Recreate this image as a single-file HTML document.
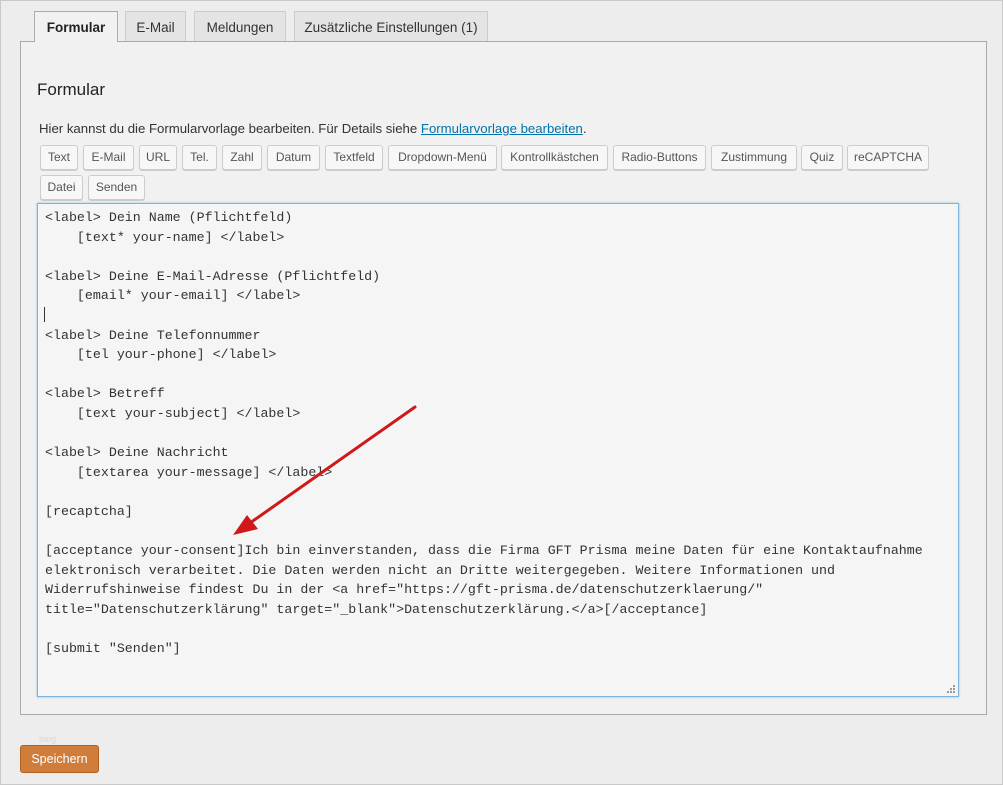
<!DOCTYPE html>
<html><head><meta charset="utf-8"><style>
body{margin:0;width:1003px;height:785px;background:#ededed;font-family:"Liberation Sans",sans-serif;position:relative;overflow:hidden}
.frame{position:absolute;left:0;top:0;width:1001px;height:783px;border:1px solid #c8c8c8}
.tab{position:absolute;top:11px;height:30px;border:1px solid #ccc;border-bottom:none;background:#e4e4e4;font-size:13.5px;color:#333;line-height:31px;text-align:center;box-sizing:border-box}
.panel{position:absolute;left:20px;top:41px;width:967px;height:674px;border:1px solid #aaa;box-sizing:border-box;background:#f1f1f1}
.b{position:absolute;height:25px;border:1px solid #ccc;border-radius:3px;background:#f7f7f7;box-shadow:0 1px 0 #ccc;box-sizing:border-box;font-size:12px;color:#555;text-align:center;line-height:23px}
.ta{position:absolute;left:37px;top:203px;width:922px;height:494px;border:1px solid #7fb3de;box-sizing:border-box;background:#f5f5f5;box-shadow:0 0 2px rgba(30,140,190,.5)}
pre{margin:0;position:absolute;left:45px;top:208px;font-family:"Liberation Mono",monospace;font-size:13.3px;line-height:19.6px;color:#333}
</style></head><body>
<div class="frame"></div>
<div class="panel"></div>
<div class="tab" style="left:34px;width:84px;height:31px;background:#f1f1f1;font-weight:bold;color:#222;border-color:#aaa">Formular</div>
<div class="tab" style="left:125px;width:61px">E-Mail</div>
<div class="tab" style="left:194px;width:92px">Meldungen</div>
<div class="tab" style="left:294px;width:194px">Zusätzliche Einstellungen (1)</div>
<div style="position:absolute;left:37px;top:80px;font-size:17px;color:#222">Formular</div>
<div style="position:absolute;left:39px;top:121px;font-size:13.2px;color:#333">Hier kannst du die Formularvorlage bearbeiten. Für Details siehe <span style="color:#0073aa;text-decoration:underline">Formularvorlage bearbeiten</span>.</div>
<div class="b" style="left:40px;top:145px;width:38px">Text</div>
<div class="b" style="left:83px;top:145px;width:51px">E-Mail</div>
<div class="b" style="left:139px;top:145px;width:38px">URL</div>
<div class="b" style="left:182px;top:145px;width:35px">Tel.</div>
<div class="b" style="left:222px;top:145px;width:40px">Zahl</div>
<div class="b" style="left:267px;top:145px;width:53px">Datum</div>
<div class="b" style="left:325px;top:145px;width:58px">Textfeld</div>
<div class="b" style="left:388px;top:145px;width:109px">Dropdown-Menü</div>
<div class="b" style="left:501px;top:145px;width:107px">Kontrollkästchen</div>
<div class="b" style="left:613px;top:145px;width:93px">Radio-Buttons</div>
<div class="b" style="left:711px;top:145px;width:86px">Zustimmung</div>
<div class="b" style="left:801px;top:145px;width:42px">Quiz</div>
<div class="b" style="left:847px;top:145px;width:82px">reCAPTCHA</div>
<div class="b" style="left:40px;top:175px;width:43px">Datei</div>
<div class="b" style="left:88px;top:175px;width:57px">Senden</div>
<div class="ta"></div>
<pre>&lt;label&gt; Dein Name (Pflichtfeld)
    [text* your-name] &lt;/label&gt;

&lt;label&gt; Deine E-Mail-Adresse (Pflichtfeld)
    [email* your-email] &lt;/label&gt;

&lt;label&gt; Deine Telefonnummer
    [tel your-phone] &lt;/label&gt;

&lt;label&gt; Betreff
    [text your-subject] &lt;/label&gt;

&lt;label&gt; Deine Nachricht
    [textarea your-message] &lt;/label&gt;

[recaptcha]

[acceptance your-consent]Ich bin einverstanden, dass die Firma GFT Prisma meine Daten für eine Kontaktaufnahme
elektronisch verarbeitet. Die Daten werden nicht an Dritte weitergegeben. Weitere Informationen und
Widerrufshinweise findest Du in der &lt;a href="https://gft-prisma.de/datenschutzerklaerung/"
title="Datenschutzerklärung" target="_blank"&gt;Datenschutzerklärung.&lt;/a&gt;[/acceptance]

[submit "Senden"]</pre>
<div style="position:absolute;left:44px;top:307px;width:1px;height:15px;background:#333"></div>
<svg style="position:absolute;left:0;top:0" width="1003" height="785">
<line x1="415" y1="407" x2="250" y2="523" stroke="#d01818" stroke-width="3" stroke-linecap="round"/>
<polygon points="233,535 247,515 258,529" fill="#d01818"/>
<g fill="#999"><rect x="953" y="685" width="2" height="2"/><rect x="950" y="688" width="2" height="2"/><rect x="953" y="688" width="2" height="2"/><rect x="947" y="691" width="2" height="2"/><rect x="950" y="691" width="2" height="2"/><rect x="953" y="691" width="2" height="2"/></g>
</svg>
<div style="position:absolute;left:39px;top:734px;font-size:9px;color:#d6d6d6">blog</div>
<div style="position:absolute;left:20px;top:745px;width:79px;height:28px;background:#d07c3a;border:1px solid #b0601f;border-radius:3px;box-sizing:border-box;color:#fff;font-size:12.5px;text-align:center;line-height:27px">Speichern</div>
</body></html>
